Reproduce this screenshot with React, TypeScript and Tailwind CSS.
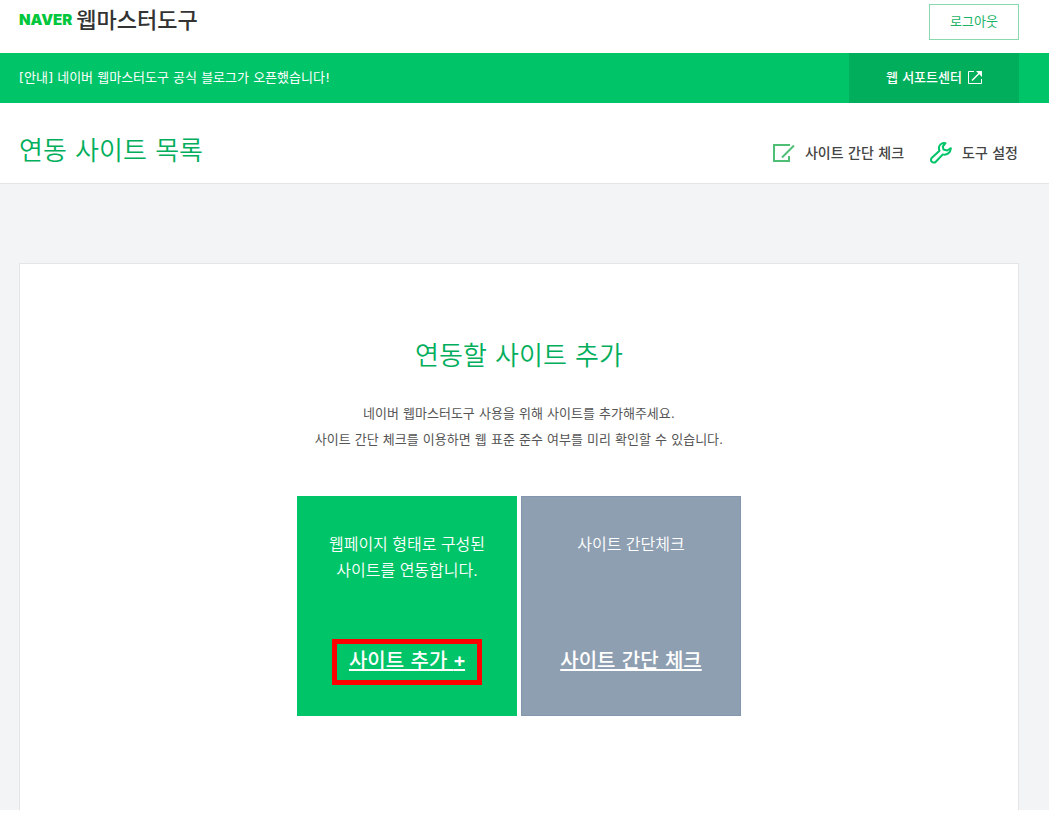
import type { ReactNode } from "react";

const NOTICE = "[안내] 네이버 웹마스터도구 공식 블로그가 오픈했습니다!";

function ExternalIcon() {
  return (
    <svg width="14" height="14" viewBox="0 0 14 14" fill="none" stroke="currentColor" aria-hidden="true">
      <path d="M6 .5H.5v12h13V8" />
      <path d="M4 9.500 11.500 2" strokeWidth="1.4" />
      <path d="M8 0h6v6Z" fill="currentColor" stroke="none" />
    </svg>
  );
}

function CheckIcon() {
  return (
    <svg width="22" height="19" viewBox="0 0 22 19" fill="none" stroke="#4fbf75" strokeWidth="2" aria-hidden="true">
      <path d="M17 2H1v16h15v-5" />
      <path d="M9 14.500 21 2.500" />
    </svg>
  );
}

function WrenchIcon() {
  return (
    <svg
      width="22"
      height="22"
      viewBox="0 0 22 22"
      fill="none"
      stroke="#00c468"
      strokeWidth="2"
      strokeLinejoin="round"
      aria-hidden="true"
    >
      <path d="M15.500 1.200C12 .6 9.400 2.600 9 5.200c-.2 1.300 0 2.400.5 3.500L1.900 15.800c-1.200 1.100-1.200 2.900-.1 4s2.900 1.100 4-.1l7-7.300c4 1 7.800-1.600 8.100-6.200l-3.700 2.300-3.700-1-.7-3L15.500 1.200Z" />
    </svg>
  );
}

function Header() {
  return (
    <header className="flex h-[53px] items-start justify-between pr-[30px] pl-[19px]">
      <a href="#" className="flex h-10 items-center gap-1">
        <span className="font-['Inter',sans-serif] text-[15px] font-black text-[#00c73c]">NAVER</span>
        <span className="text-[22px] font-medium text-[#333]">웹마스터도구</span>
      </a>
      <button
        type="button"
        className="mt-1 h-9 w-[90px] cursor-pointer border border-[#8ad9ae] text-[13px] text-[#1bb467]"
      >
        로그아웃
      </button>
    </header>
  );
}

function NoticeBar() {
  return (
    <div className="flex h-[50px] items-stretch justify-between bg-[#00c468] pr-[30px] pl-[19px] text-[13px] text-white">
      <a href="#" className="flex items-center">
        {NOTICE}
      </a>
      <a
        href="#"
        className="flex w-[170px] items-center justify-center gap-1.5 bg-[#00ae5b] font-medium"
      >
        웹 서포트센터
        <ExternalIcon />
      </a>
    </div>
  );
}

function ToolLink({ icon, label }: { icon: ReactNode; label: string }) {
  return (
    <a href="#" className="flex items-center gap-2.5">
      {icon}
      {label}
    </a>
  );
}

function TitleBar() {
  return (
    <div className="flex h-[81px] items-center justify-between border-b border-[#e3e5e7] pt-4 pr-[30px] pl-[19px]">
      <h1 className="text-[26px] leading-9 font-[350] text-[#00ae5b]">연동 사이트 목록</h1>
      <nav className="flex items-center gap-[26px] pt-[3px] pr-px text-sm font-medium text-[#444]">
        <ToolLink icon={<CheckIcon />} label="사이트 간단 체크" />
        <ToolLink icon={<WrenchIcon />} label="도구 설정" />
      </nav>
    </div>
  );
}

function AddSiteCard() {
  return (
    <section className="flex grow flex-col items-center border border-b-0 border-[#e3e5e7] bg-white pt-[74px] text-center">
      <h2 className="text-[26px] leading-9 font-[350] text-[#00ae5b]">연동할 사이트 추가</h2>
      <p className="mt-[27px] text-[13px] leading-[26px] text-[#555]">
        네이버 웹마스터도구 사용을 위해 사이트를 추가해주세요.
        <br />
        사이트 간단 체크를 이용하면 웹 표준 준수 여부를 미리 확인할 수 있습니다.
      </p>
      <div className="mt-[43px] flex gap-1 text-white">
        <div className="flex size-[220px] flex-col items-center justify-between bg-[#00c468] pt-9 pb-[31px]">
          <p className="font-['Liberation_Sans','Noto_Sans_CJK_KR',sans-serif] leading-[26px] font-[350]">
            웹페이지 형태로 구성된
            <br />
            사이트를 연동합니다.
          </p>
          <a
            href="#"
            className="h-[46px] w-[150px] border-5 border-[#f00] text-xl leading-[34px] font-medium underline"
          >
            사이트 추가 <span className="font-['Open_Sans',sans-serif] font-bold">+</span>
          </a>
        </div>
        <div className="flex size-[220px] flex-col items-center justify-between border border-[#8296ae] bg-[#8f9fb2] pt-[35px] pb-[37px]">
          <p className="font-['Liberation_Sans','Noto_Sans_CJK_KR',sans-serif] leading-[26px] font-[350]">
            사이트 간단체크
          </p>
          <a href="#" className="text-xl leading-[34px] font-medium underline">
            사이트 간단 체크
          </a>
        </div>
      </div>
    </section>
  );
}

export default function App() {
  return (
    <div className="flex min-h-screen flex-col bg-white pr-[5px] pb-2.5 font-['DejaVu_Sans','Noto_Sans_CJK_KR',sans-serif]">
      <Header />
      <NoticeBar />
      <TitleBar />
      <main className="flex grow flex-col bg-[#f3f4f6] pt-[79px] pr-[30px] pl-[19px]">
        <AddSiteCard />
      </main>
    </div>
  );
}
